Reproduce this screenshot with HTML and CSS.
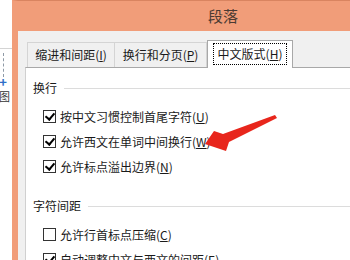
FILE: index.html
```html
<!DOCTYPE html>
<html lang="zh-CN">
<head>
  <meta charset="UTF-8" />
  <title>段落</title>
  <link rel="stylesheet" href="styles.css">
</head>
<body>

  <div class="screen">
    <div class="outside">
      <div class="rule"></div>
      <div class="dash"></div>
      <div class="plus">+</div>
      <div class="cut">截图</div>
    </div>

    <div class="dialog">
      <div class="titlebar">段落</div>

      <div class="dlg-body">
        <div class="tabs">
          <div class="tab tab-indent">缩进和间距(<u>I</u>)</div>
          <div class="tab tab-break">换行和分页(<u>P</u>)</div>
          <div class="tab active"><span class="focus">中文版式(<u>H</u>)</span></div>
        </div>

        <div class="panel">
          <div class="group-head"><span>换行</span><i></i></div>
          <div class="opt first"><span class="box on"></span>按中文习惯控制首尾字符(<u>U</u>)</div>
          <div class="opt"><span class="box on"></span>允许西文在单词中间换行(<u>W</u>)</div>
          <div class="opt"><span class="box on"></span>允许标点溢出边界(<u>N</u>)</div>

          <div class="group-head second"><span>字符间距</span><i></i></div>
          <div class="opt first"><span class="box"></span>允许行首标点压缩(<u>C</u>)</div>
          <div class="opt"><span class="box on"></span>自动调整中文与西文的间距(<u>E</u>)</div>
        </div>
      </div>
    </div>

    <!-- red annotation arrow -->
    <svg class="arrow" width="350" height="260" viewBox="0 0 350 260">
      <polygon points="205,144 214,131 223,134 275,115 277,118 229,142 226,151" fill="#e8261c" />
    </svg>
  </div>

</body>
</html>
```

FILE: styles.css
```css
* {
  margin: 0;
  padding: 0;
  box-sizing: border-box;
}

body {
  width: 350px;
  height: 260px;
  overflow: hidden;
  background-color: #fff;
  font-family: "Noto Sans CJK SC", "Noto Sans", sans-serif;
  font-size: 12px;
  color: #1a1a1a;
}

.screen {
  position: relative;
  display: flex;
  width: 350px;
  height: 260px;
  overflow: hidden;
}

/* the window behind the dialog */
.outside {
  width: 12px;
  flex-shrink: 0;
  padding-top: 48px;
  overflow: hidden;
  background-color: #fff;
}

.outside .rule {
  height: 1px;
  background-color: #d4d4d4;
}

.outside .dash {
  width: 1px;
  height: 24px;
  margin: 4px 0 0 3px;
  border-left: 1px dashed #8f9aa6;
}

.outside .plus {
  width: 8px;
  height: 9px;
  line-height: 9px;
  font-size: 13px;
  font-weight: bold;
  color: #2f6ec8;
  text-align: center;
  margin-left: -1px;
}

.outside .cut {
  width: 24px;
  margin-left: -12px;
  margin-top: 4px;
  line-height: 12px;
  font-size: 11px;
  color: #333;
  white-space: nowrap;
}

/* dialog */
.dialog {
  width: 422px;
  flex-shrink: 0;
  border-left: 6px solid #f19d79;
  border-top: 1px solid #d98460;
  display: flex;
  flex-direction: column;
}

.titlebar {
  height: 30px;
  background-color: #f19d79;
  text-align: center;
  font-size: 15px;
  line-height: 30px;
  color: #4a3a32;
  padding-right: 6px;
}

.dlg-body {
  flex: 1;
  background-color: #f0f0f0;
  padding: 9px 0 0 7px;
  display: flex;
  flex-direction: column;
}

.tabs {
  display: flex;
  align-items: flex-end;
  height: 27px;
  padding-left: 2px;
}

.tab {
  height: 25px;
  line-height: 23px;
  text-align: center;
  border: 1px solid #d4d4d4;
  border-bottom: none;
  background-color: #f0f0f0;
  color: #1a1a1a;
}

.tab-indent {
  width: 88px;
}

.tab-break {
  width: 92px;
  border-left: none;
}

.tab.active {
  position: relative;
  z-index: 1;
  width: 86px;
  height: 28px;
  margin-bottom: -1px;
  padding-top: 2px;
  background-color: #fff;
  border: 1px solid #a8a8a8;
  border-bottom: none;
  line-height: 20px;
}

.focus {
  display: inline-block;
  width: 74px;
  height: 22px;
  border: 1px dotted #000;
  line-height: 20px;
}

.panel {
  flex: 1;
  background-color: #fff;
  border-top: 1px solid #a8a8a8;
  border-left: 1px solid #d0d0d0;
  padding: 12px 0 0 7px;
}

.group-head {
  display: flex;
  align-items: center;
  height: 16px;
  line-height: 16px;
}

.group-head i {
  flex: 1;
  height: 1px;
  margin-left: 7px;
  background-color: #dcdcdc;
}

.group-head.second {
  margin-top: 19px;
}

.opt {
  display: flex;
  align-items: center;
  height: 25px;
  padding-left: 10px;
  white-space: nowrap;
}

.opt.first {
  margin-top: 8px;
}

.box {
  width: 13px;
  height: 13px;
  margin-right: 4px;
  border: 1px solid #333;
  background-color: #fff;
  flex-shrink: 0;
  position: relative;
}

.box.on::after {
  content: "";
  position: absolute;
  left: 3px;
  top: 0px;
  width: 4px;
  height: 7px;
  border-right: 2px solid #000;
  border-bottom: 2px solid #000;
  transform: rotate(40deg);
}

u {
  text-decoration: underline;
  text-underline-offset: 1px;
}

.arrow {
  position: absolute;
  left: 0;
  top: 0;
  pointer-events: none;
}
```
